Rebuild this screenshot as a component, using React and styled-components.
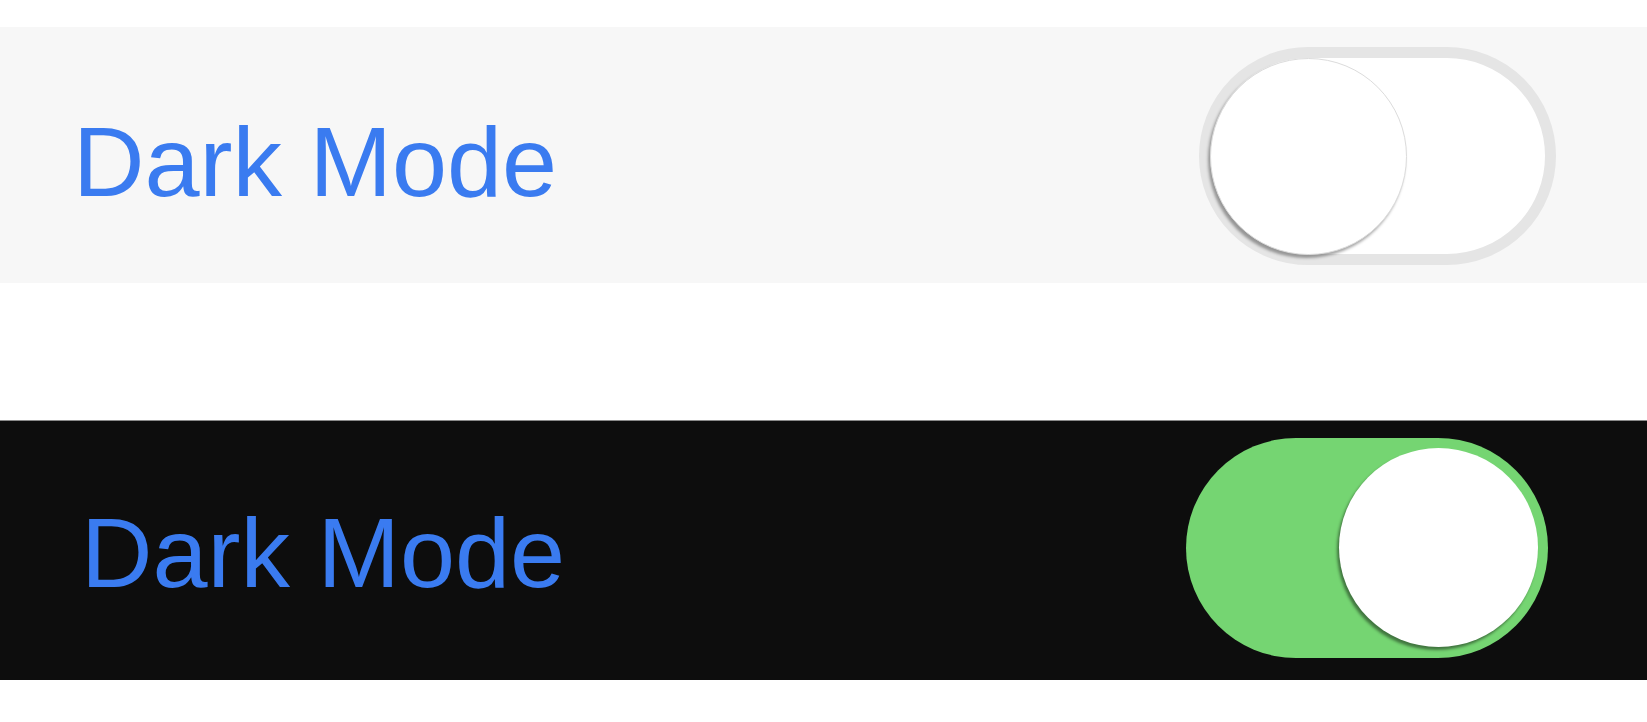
import React from "react";
import styled, { createGlobalStyle } from "styled-components";

const Global = createGlobalStyle`
  html, body { margin: 0; padding: 0; background: #ffffff; }
  body { font-family: "Liberation Sans", Arial, sans-serif; }
`;

const Page = styled.div`
  display: flex;
  flex-direction: column;
  gap: 137px;
  padding-top: 27px;
  width: 1647px;
  height: 722px;
  box-sizing: border-box;
`;

const Row = styled.div`
  display: flex;
  align-items: center;
  justify-content: space-between;
  box-sizing: border-box;
  height: ${(p) => (p.$dark ? "260px" : "256px")};
  background: ${(p) => (p.$dark ? "#0d0d0d" : "#f7f7f7")};
  border-top: ${(p) => (p.$dark ? "1px solid #8a8a8a" : "none")};
  padding-left: ${(p) => p.$padLeft}px;
  padding-right: ${(p) => p.$padRight}px;
`;

const Label = styled.span`
  font-family: "Liberation Sans", Arial, sans-serif;
  font-size: 99px;
  line-height: 1;
  color: #3a7bf0;
  margin-top: ${(p) => p.$shift}px;
  white-space: nowrap;
`;

const Track = styled.div`
  box-sizing: border-box;
  width: ${(p) => (p.$on ? 362 : 357)}px;
  height: ${(p) => (p.$on ? 220 : 218)}px;
  border-radius: 120px;
  background: ${(p) => (p.$on ? "#75d572" : "#ffffff")};
  border: ${(p) => (p.$on ? "none" : "11px solid #e5e5e5")};
  margin-top: ${(p) => p.$shift}px;
  display: flex;
  align-items: center;
  justify-content: ${(p) => (p.$on ? "flex-end" : "flex-start")};
  padding: ${(p) => (p.$on ? "0 10px 0 0" : "0")};
`;

const Thumb = styled.div`
  box-sizing: border-box;
  width: ${(p) => (p.$on ? 199 : 197)}px;
  height: ${(p) => (p.$on ? 199 : 197)}px;
  border-radius: 50%;
  background: #ffffff;
  border: ${(p) => (p.$on ? "none" : "1px solid #dcdcdc")};
  box-shadow: ${(p) =>
    p.$on
      ? "-2px 3px 3px rgba(0,0,0,0.45)"
      : "-2px 3px 3px rgba(0,0,0,0.35)"};
`;

function Toggle({ on, shift = 0 }) {
  return (
    <Track $on={on} $shift={shift}>
      <Thumb $on={on} />
    </Track>
  );
}

export default function App() {
  return (
    <>
      <Global />
      <Page>
        <Row $padLeft={73} $padRight={91}>
          <Label $shift={12}>Dark Mode</Label>
          <Toggle on={false} shift={2} />
        </Row>
        <Row $dark $padLeft={81} $padRight={99}>
          <Label $shift={4}>Dark Mode</Label>
          <Toggle on shift={-6} />
        </Row>
      </Page>
    </>
  );
}
